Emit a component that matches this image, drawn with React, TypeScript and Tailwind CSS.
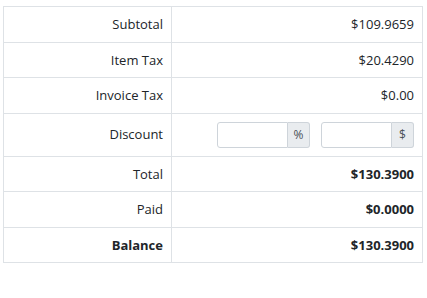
import React from "react";

type Row = {
    label: string;
    value?: string;
    bold?: boolean;
    boldLabel?: boolean;
    discount?: boolean;
};

const rows: Row[] = [
    { label: "Subtotal", value: "$109.9659" },
    { label: "Item Tax", value: "$20.4290" },
    { label: "Invoice Tax", value: "$0.00" },
    { label: "Discount", discount: true },
    { label: "Total", value: "$130.3900", bold: true },
    { label: "Paid", value: "$0.0000", bold: true },
    { label: "Balance", value: "$130.3900", bold: true, boldLabel: true },
];

// small input with an appended addon, bootstrap style
function AddonInput({ addon }: { addon: string }) {
    return (
        <div className="flex h-[26px] w-[93px]">
            <input
                type="text"
                className="min-w-0 flex-1 rounded-l-[3px] border border-[#ced4da] bg-white px-2 text-[13px] outline-none"
            />
            <span className="flex w-[22px] items-center justify-center rounded-r-[3px] border border-l-0 border-[#ced4da] bg-[#e9ecef] text-[12px] text-[#495057]">
                {addon}
            </span>
        </div>
    );
}

export default function App() {
    return (
        <div className="pl-[3px] pt-[6px]" style={{ fontFamily: '"Open Sans", "Noto Sans", sans-serif' }}>
            <table className="w-[420px] border-collapse text-[13px] text-[#212529]">
                <tbody>
                    {rows.map((r) => (
                        <tr key={r.label}>
                            <td
                                className={`w-[168px] border border-[#dee2e6] px-2 py-2 text-right leading-[18.5px] ${
                                    r.boldLabel ? "font-bold" : ""
                                }`}
                            >
                                {r.label}
                            </td>
                            <td
                                className={`border border-[#dee2e6] px-2 text-right ${
                                    r.discount ? "py-[8px] leading-none" : "py-2 leading-[18.5px]"
                                } ${r.bold ? "font-bold" : ""}`}
                            >
                                {r.discount ? (
                                    <div className="flex justify-end gap-[11px]">
                                        <AddonInput addon="%" />
                                        <AddonInput addon="$" />
                                    </div>
                                ) : (
                                    r.value
                                )}
                            </td>
                        </tr>
                    ))}
                </tbody>
            </table>
        </div>
    );
}
